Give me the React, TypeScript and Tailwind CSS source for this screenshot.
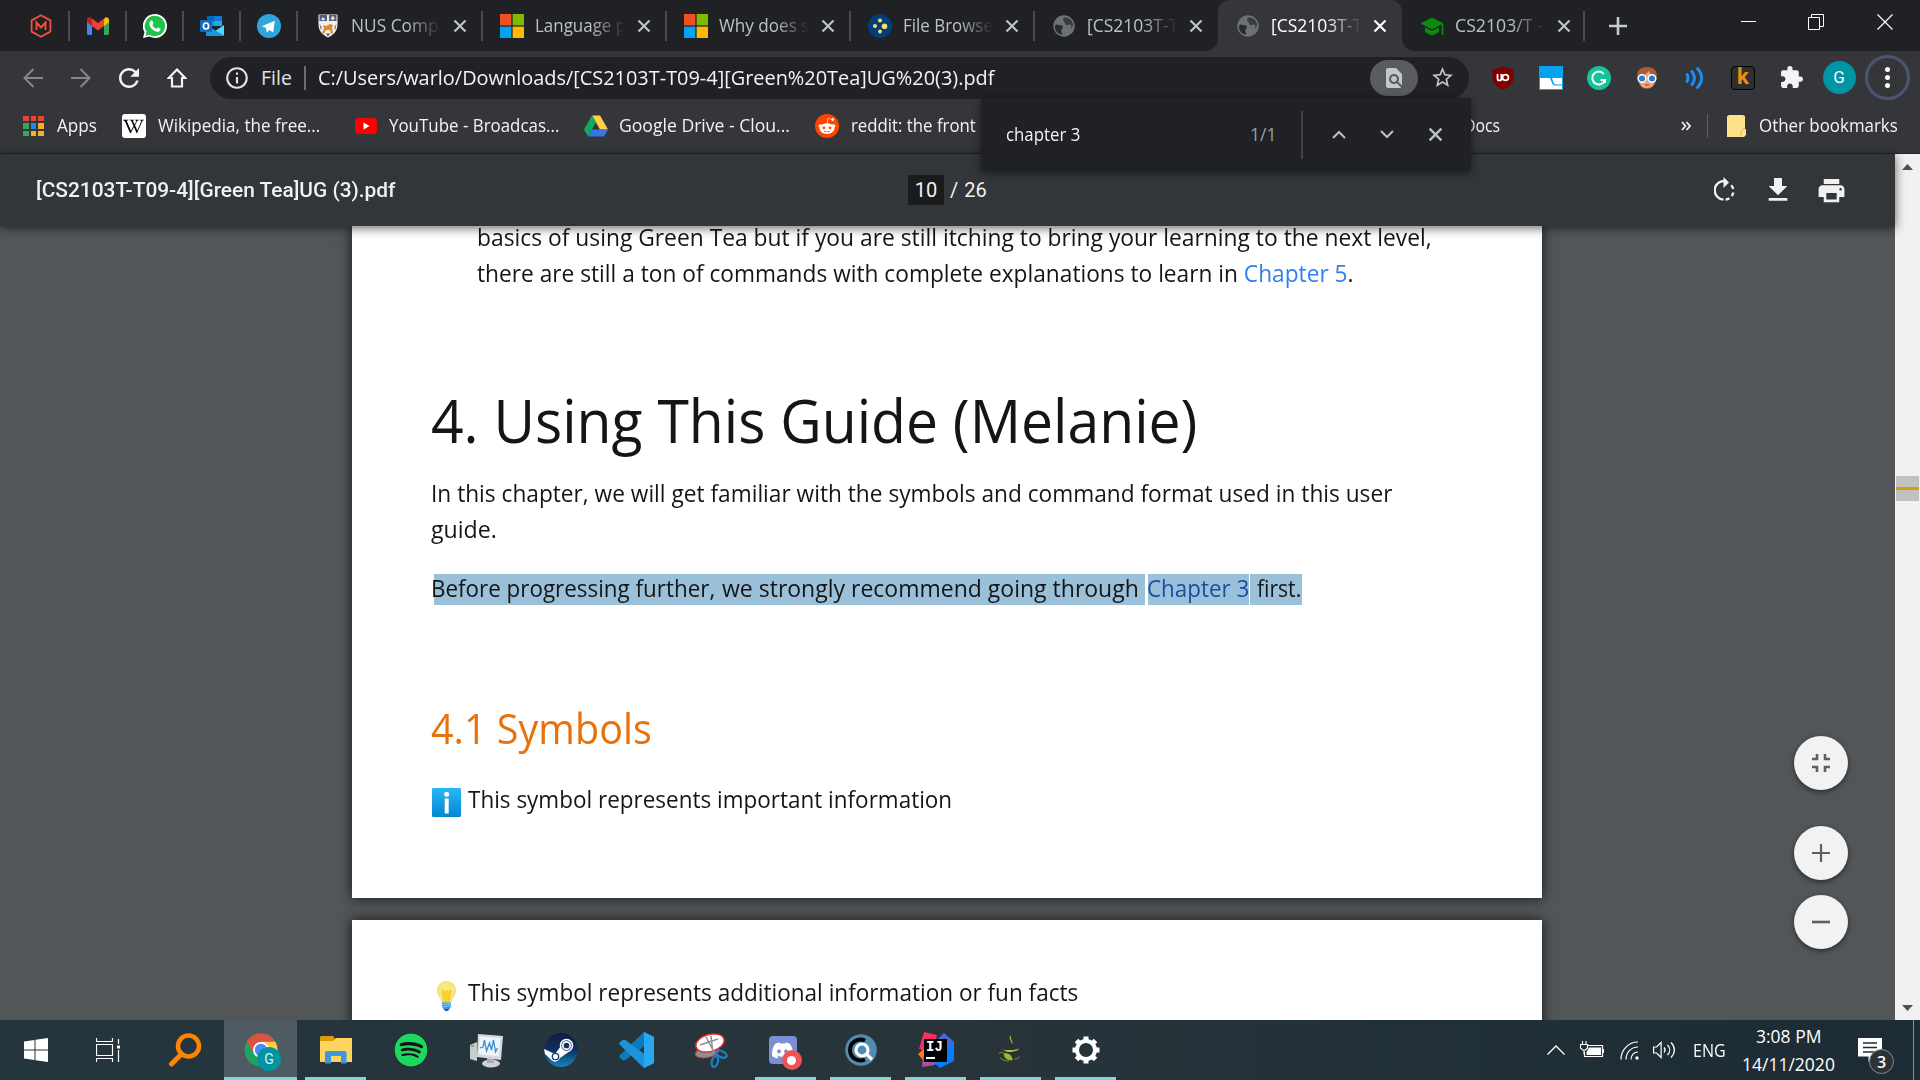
import { useLayoutEffect, useRef, useState, type ReactNode } from "react";
import { FaDiscord, FaRedditAlien, FaSpotify, FaWikipediaW } from "react-icons/fa";
import {
  MdExtension,
  MdFileDownload,
  MdFindInPage,
  MdInfoOutline,
  MdPrint,
  MdRefresh,
  MdStarBorder,
} from "react-icons/md";

/** One line of text, condensed or widened to fill the width its class gives. */
function Fit({ className, children }: { className: string; children: ReactNode }) {
  const outer = useRef<HTMLSpanElement>(null);
  const inner = useRef<HTMLSpanElement>(null);
  const [scale, setScale] = useState(1);
  useLayoutEffect(() => {
    if (outer.current && inner.current) {
      setScale(outer.current.offsetWidth / inner.current.offsetWidth);
    }
  }, []);
  return (
    <span ref={outer} className={`block shrink-0 whitespace-nowrap ${className}`}>
      <span ref={inner} className="inline-block origin-left align-top" style={{ transform: `scaleX(${scale})` }}>
        {children}
      </span>
    </span>
  );
}

function Svg({ vb = "0 0 24 24", className = "size-6", children }: { vb?: string; className?: string; children: ReactNode }) {
  return (
    <svg viewBox={vb} className={`shrink-0 ${className}`} fill="none">
      {children}
    </svg>
  );
}

function Cross({ className }: { className: string }) {
  return (
    <Svg vb="0 0 14 14" className={className}>
      <path d="M1.5 1.5l11 11M12.5 1.5l-11 11" stroke="currentColor" strokeWidth="2.2" />
    </Svg>
  );
}

/* ---------- tab icons ---------- */

const Module = () => (
  <Svg>
    <path d="M12 1.2l9.4 5.2v11.2L12 22.8l-9.4-5.2V6.4z" stroke="#f4503b" strokeWidth="1.8" strokeLinejoin="round" />
    <path d="M7.5 16V8.500l4.500 5 4.500-5V16" stroke="#f4503b" strokeWidth="1.9" />
  </Svg>
);
const Gmail = () => (
  <Svg>
    <path d="M1 6v13.500c0 .8.600 1.400 1.400 1.400H6V10z" fill="#4285f4" />
    <path d="M23 6v13.500c0 .8-.6 1.400-1.400 1.400H18V10z" fill="#34a853" />
    <path d="M18 5.500V12l5-3.800V6c0-2.400-2.600-3.400-4.200-2.200z" fill="#fbbc04" />
    <path d="M6 5.500V12L1 8.200V6c0-2.400 2.600-3.400 4.200-2.200z" fill="#c5221f" />
    <path d="M6 12V4.600l6 4.500 6-4.500V12l-6 4.500z" fill="#ea4335" />
  </Svg>
);
const Whatsapp = () => (
  <Svg>
    <path d="M12 0a12 12 0 0 1 0 24c-2 0-4-.5-5.600-1.400L0 24l1.500-6A12 12 0 0 1 12 0z" fill="#fff" />
    <path d="M12 1.800a10.200 10.200 0 0 1 0 20.400c-2 0-3.800-.5-5.300-1.500l-4.200 1.100 1.100-4A10.200 10.200 0 0 1 12 1.800z" fill="#1fc24d" />
    <path d="M8.400 6.500c.5 0 .9 0 1.200.8l.8 2c.1.400-.7 1.200-1 1.600.8 1.700 2.200 3 4 3.800.5-.4 1.200-1.500 1.700-1.300l2.100 1c.6.300.3 1.500-.1 2.100-.6.900-2 1.400-3 1.200-3.900-.8-7-3.800-7.700-7.200-.3-1.500.7-4 2-4z" fill="#fff" />
  </Svg>
);
const Outlook = () => (
  <Svg>
    <path d="M7 2h15v10H7z" fill="#1490df" />
    <path d="M7 2h7.500v5H7z" fill="#0364b8" />
    <path d="M14.500 7H22v5h-7.500z" fill="#28a8ea" />
    <path d="M14.500 2H22v5h-7.500z" fill="#0f78d4" />
    <path d="M6 11l9 6 9-6v9.500c0 .8-.7 1.500-1.500 1.500h-15c-.8 0-1.500-.7-1.500-1.500z" fill="#50d9ff" />
    <path d="M6 11l18 10.500c-.3.300-.9.500-1.500.5h-15c-.8 0-1.500-.7-1.500-1.500z" fill="#1a96e0" />
    <rect x="0" y="6" width="12" height="12" rx="1" fill="#0f6cbd" />
    <ellipse cx="6" cy="12" rx="2.600" ry="3" stroke="#fff" strokeWidth="1.7" />
  </Svg>
);
const Telegram = () => (
  <Svg>
    <circle cx="12" cy="12" r="12" fill="#2fa5dc" />
    <path d="M17.800 6.800L4.800 12.200l4 1.600 1 4.700 2.600-2.600 3.800 2.600z" fill="#fff" />
    <path d="M9.300 14.500l6-5.500-5 6.500" fill="#d3e9f6" />
  </Svg>
);
const Crest = () => (
  <Svg>
    <path d="M2.500 0.500h19V10c0 7-4 11-9.500 13.500C6.500 21 2.500 17 2.500 10z" fill="#f3f0ec" />
    <path d="M3.500 1h7.500v6H3.500zM13 1h7.500v6H13z" fill="#4a5f85" />
    <path d="M5 5.500l2-2.500 2.500 2.500L7 6.500zM14.500 4.500l2.300-3 2.300 3-2.300 2z" fill="#e7d9c0" />
    <path d="M7 11l3 1 4-2 3 1-1 3 1 5-2 1-1-4h-4l-2 4-2-1 2-4z" fill="#e58a2a" />
    <path d="M3.500 9.500l2 4-.5 3zM20.500 9.500l-2 4 .5 3zM10 19.500h4l-2 3z" fill="#3c527c" />
  </Svg>
);
const Microsoft = () => (
  <Svg>
    <path d="M0 0h11.400v11.400H0z" fill="#f25022" />
    <path d="M12.600 0H24v11.400H12.600z" fill="#7fba00" />
    <path d="M0 12.600h11.400V24H0z" fill="#00a4ef" />
    <path d="M12.600 12.600H24V24H12.600z" fill="#ffb900" />
  </Svg>
);
const Luminus = () => (
  <Svg>
    <circle cx="12" cy="12" r="12" fill="#043c7c" />
    <circle cx="12" cy="6.500" r="2.100" fill="#f5e05a" />
    <circle cx="7" cy="12" r="2.100" fill="#f5e05a" />
    <circle cx="16.500" cy="12.300" r="2.800" fill="#f5e05a" />
    <circle cx="12" cy="17.500" r="1.900" fill="#f5e05a" />
  </Svg>
);
const Globe = () => (
  <Svg>
    <circle cx="12" cy="12" r="10.700" fill="#6d7074" />
    <path d="M3 14c0-2 .5-3.500 1.500-3.500l5 1c2 .5 2 2.500.5 3.500s-.5 3 .5 5.500c-4-.2-7-3-7.500-6.500z" fill="#292a2d" />
    <path d="M12.500 3.500c-2 1-2 3-.5 4s.5 2.500 2 3.500 2-1 4-.5 1.500 3.500.5 5 1.500-1 2.300-3.500c.8-4-2.300-8.700-8.300-8.500z" fill="#3b3c40" />
  </Svg>
);
const Cap = () => (
  <Svg>
    <path d="M12 3.500l11.500 6L12 15.500.5 9.500z" fill="#0b8a0b" />
    <path d="M5 13.200l7 3.700 7-3.700v5L12 21.500 5 18.200z" fill="#0b8a0b" />
    <path d="M22.500 10v11" stroke="#0b8a0b" strokeWidth="1.800" />
  </Svg>
);

function Tab({ icon, active, last, children }: { icon: ReactNode; active?: boolean; last?: boolean; children: ReactNode }) {
  return (
    <div
      className={`relative flex h-full shrink-0 items-center pl-[18px] ${last ? "w-[182px]" : "w-[184px]"} ${
        active ? "rounded-t-xl bg-[#35363a] text-white" : "text-[#bdc1c6]"
      }`}
    >
      {active && (
        <>
          <span className="absolute bottom-0 -left-3 size-3 bg-[radial-gradient(circle_at_0_0,transparent_11.5px,#35363a_12px)]" />
          <span className="absolute -right-3 bottom-0 size-3 bg-[radial-gradient(circle_at_100%_0,transparent_11.5px,#35363a_12px)]" />
        </>
      )}
      {icon}
      <div className="ml-[11px] w-[92px] [mask-image:linear-gradient(to_right,black_60%,transparent_98%)] pb-px">{children}</div>
      <Cross className="ml-[10px] size-[14px]" />
    </div>
  );
}

const Divider = () => <span className="-mx-px h-[30px] w-0.5 shrink-0 bg-[#4b4c50]" />;

function TabStrip() {
  const pinned = [<Module />, <Gmail />, <Whatsapp />, <Outlook />, <Telegram />];
  return (
    <div className="flex h-[51px] items-center bg-[#202124] pl-[12px]">
      {pinned.map((p, i) => (
        <div key={i} className="flex items-center">
          <div className="flex w-[57px] justify-center">{p}</div>
          <Divider />
        </div>
      ))}
      <span className="w-px shrink-0" />
      <Tab icon={<Crest />}><Fit className="w-[88px]">NUS Comp</Fit></Tab>
      <Divider />
      <Tab icon={<Microsoft />}><Fit className="w-[91px]">Language p</Fit></Tab>
      <Divider />
      <Tab icon={<Microsoft />}><Fit className="w-[91px]">Why does s</Fit></Tab>
      <Divider />
      <Tab icon={<Luminus />}><Fit className="w-[90px]">File Browse</Fit></Tab>
      <Divider />
      <Tab icon={<Globe />}><Fit className="w-[91px]">[CS2103T-T</Fit></Tab>
      <Tab active icon={<Globe />}><Fit className="w-[91px]">[CS2103T-T</Fit></Tab>
      <Tab last icon={<Cap />}><Fit className="w-[88px]">CS2103/T -</Fit></Tab>
      <Divider />
      <Svg className="ml-[25px] size-[18px] text-[#c6c9cd]" vb="0 0 18 18">
        <path d="M9 0v18M0 9h18" stroke="currentColor" strokeWidth="2.600" />
      </Svg>
      <div className="mr-[27px] mb-[8px] ml-auto flex items-center text-white">
        <Svg vb="0 0 16 16" className="mr-[51px] size-4"><path d="M0 7.500h15" stroke="currentColor" /></Svg>
        <Svg vb="0 0 16 16" className="mr-[53px] size-4">
          <path d="M.5 3.500h11v12H.5zM3.500 3.500v-3h12v12h-4" stroke="currentColor" />
        </Svg>
        <Svg vb="0 0 16 16" className="size-4"><path d="M.5.5l15 15M15.500.5l-15 15" stroke="currentColor" strokeWidth="1.200" /></Svg>
      </div>
    </div>
  );
}

/* ---------- address row ---------- */

const Slot = ({ children }: { children: ReactNode }) => <div className="flex w-12 shrink-0 items-center justify-center">{children}</div>;

function AddressRow() {
  return (
    <div className="flex h-[53px] items-center pl-[9px] text-[#f1f3f4]">
      <Slot>
        <Svg className="size-5 text-[#85878a]" vb="0 0 20 20"><path d="M20 10H2M10.500 1L1.500 10l9 9" stroke="currentColor" strokeWidth="2" /></Svg>
      </Slot>
      <Slot>
        <Svg className="size-5 text-[#85878a]" vb="0 0 20 20"><path d="M0 10h18M9.500 1l9 9-9 9" stroke="currentColor" strokeWidth="2" /></Svg>
      </Slot>
      <Slot><MdRefresh className="size-[30px]" /></Slot>
      <Slot>
        <Svg className="size-5" vb="0 0 20 20"><path d="M10 1.500L1.800 10H5v8.500h10V10h3.200z" stroke="currentColor" strokeWidth="2.200" /></Svg>
      </Slot>
      <div className="ml-[9px] flex h-[42px] w-[1259px] shrink-0 items-center rounded-full bg-[#202124] pl-[14px]">
        <MdInfoOutline className="size-[26px] text-[#e0e2e4]" />
        <Fit className="ml-[11px] w-[31px] text-[19.500px] text-[#e0e2e4]">File</Fit>
        <span className="ml-3 h-6 w-0.5 bg-[#6b6d70]" />
        <Fit className="mr-px ml-[12px] w-[677px] text-[19.500px]">C:/Users/warlo/Downloads/[CS2103T-T09-4][Green%20Tea]UG%20(3).pdf</Fit>
        <span className="ml-auto flex h-9 w-12 items-center justify-center rounded-full bg-[#5a5b5e] text-[#c4c7ca]">
          <MdFindInPage className="size-6" />
        </span>
        <MdStarBorder className="mr-3.5 ml-3 size-[25px] text-[#c4c7ca]" />
      </div>
      <div className="ml-[10px] flex items-center">
        <Slot>
          <Svg>
            <path d="M12 0c3 2 6 3 10.500 3v9c0 5.500-4 9-10.500 12C5.500 21 1.500 17.500 1.500 12V3C6 3 9 2 12 0z" fill="#800000" />
            <path d="M6.500 8v4.500c0 1.300.7 2 2 2s2-.7 2-2V8" stroke="#fff" strokeWidth="1.700" />
            <path d="M10.500 8v4" stroke="#fff" strokeWidth="1.700" />
            <circle cx="14.500" cy="11.500" r="2.900" stroke="#fff" strokeWidth="1.700" />
          </Svg>
        </Slot>
        <Slot>
          <Svg>
            <path d="M0 0h24v24H0z" fill="#04a3ee" />
            <path d="M1 12h10l2 5c.5 1.500 1.500 2.500 3 2.500h7V23H1z" fill="#fff" />
            <path d="M13 12h10v6.500h-6c-1.500 0-2-.8-2.500-2z" fill="#fff" />
          </Svg>
        </Slot>
        <Slot>
          <Svg>
            <circle cx="12" cy="12" r="12" fill="#15c39a" />
            <path d="M16.800 7.800A6.500 6.500 0 1 0 18 14h-4.500M18 13v4" stroke="#fff" strokeWidth="2" />
          </Svg>
        </Slot>
        <Slot>
          <Svg>
            <path d="M3 15C0 5 5 1 12 1s12 4 9 14c-1 5-5 8-9 8s-8-3-9-8z" fill="#a5603a" />
            <path d="M5 11c4-1 7-4 9-6 1 3 3 5 5 6v5c0 4-3 6-7 6s-7-2-7-6z" fill="#eaa57c" />
            <circle cx="7" cy="12.500" r="3.800" fill="#2b7bd0" stroke="#fff" strokeWidth="1.500" />
            <circle cx="17" cy="12.500" r="3.800" fill="#2b7bd0" stroke="#fff" strokeWidth="1.500" />
            <path d="M10 19h4" stroke="#b5533f" strokeWidth="1.400" />
          </Svg>
        </Slot>
        <Slot>
          <Svg>
            <path d="M4 8.500c1.500 2.500 1.500 4.500 0 7M9 5.500c3 4 3 9 0 13M14.500 2.500c5.500 6 5.500 13 0 19" stroke="#1a8cf5" strokeWidth="3" strokeLinecap="round" />
          </Svg>
        </Slot>
        <Slot>
          <span className="flex size-6 items-center justify-center rounded-[4px] border border-black bg-[#2f2f2f] pb-0.5 font-['Roboto'] text-[22px] leading-none font-bold text-[#f28a11]">k</span>
        </Slot>
        <Slot><MdExtension className="size-[25px]" /></Slot>
        <Slot>
          <span className="flex size-[33px] items-center justify-center rounded-full bg-[#0095a5] font-['Roboto'] text-[17px] text-white">G</span>
        </Slot>
        <Slot>
          <span className="flex size-[45px] shrink-0 flex-col items-center justify-center gap-[3px] rounded-full border-[3px] border-[#4a5670]">
            <i className="size-[5px] rounded-full bg-white" />
            <i className="size-[5px] rounded-full bg-white" />
            <i className="size-[5px] rounded-full bg-white" />
          </span>
        </Slot>
      </div>
    </div>
  );
}

/* ---------- bookmarks ---------- */

const appColors = [
  "bg-[#ea4335]", "bg-[#ea4335]", "bg-[#ea4335]",
  "bg-[#34a853]", "bg-[#1a8cf0]", "bg-[#fbae17]",
  "bg-[#34a853]", "bg-[#fbae17]", "bg-[#fbae17]",
];

function Bookmarks() {
  return (
    <div className="flex h-[44px] items-center pl-[23px] text-[18px] text-[#f1f3f4]">
      <div className="grid grid-cols-3 gap-[2px]">
        {appColors.map((c, i) => <i key={i} className={`size-[5.5px] ${c}`} />)}
      </div>
      <Fit className="ml-[13px] w-10 pb-0.5">Apps</Fit>
      <span className="ml-[25px] flex size-6 items-center justify-center rounded-[3px] bg-white text-black"><FaWikipediaW className="size-[21px]" /></span>
      <Fit className="ml-[12px] w-[162px] pb-0.5">Wikipedia, the free...</Fit>
      <Svg className="ml-[35px] h-5 w-[22px]" vb="0 0 22 20">
        <rect y="2" width="22" height="16" rx="3.500" fill="#f00" />
        <path d="M8.500 6.500v7l6-3.500z" fill="#fff" />
      </Svg>
      <Fit className="ml-[12px] w-[170px] pb-0.5">YouTube - Broadcas...</Fit>
      <Svg className="ml-[25px] size-6">
        <path d="M8 1.500h8l8 14h-8z" fill="#ffcf48" />
        <path d="M8 1.500l4 7L4 22.500l-4-7z" fill="#11a861" />
        <path d="M8 15.500h16l-4 7H4z" fill="#3777e3" />
      </Svg>
      <Fit className="ml-[11px] w-[171px] pb-0.5">Google Drive - Clou...</Fit>
      <span className="ml-[25px] flex size-6 items-center justify-center rounded-full bg-[#ff4500] text-white"><FaRedditAlien className="size-[18px]" /></span>
      <Fit className="ml-[12px] w-[125px] pb-0.5">reddit: the front</Fit>
      <Fit className="ml-[488px] w-[36px] pb-0.5">Docs</Fit>
      <Svg className="ml-[181px] size-[10px]" vb="0 0 10 10">
        <path d="M1 1l3.500 4L1 9M5.500 1L9 5 5.500 9" stroke="currentColor" strokeWidth="1.700" />
      </Svg>
      <span className="ml-[16px] h-6 w-px bg-[#5f6165]" />
      <Svg className="ml-[19px] h-[22px] w-[19px]" vb="0 0 19 22">
        <path d="M0 1.500L2 0h14l2 1v13h1v6l-2 2H0z" fill="#ffe18b" />
        <path d="M14 21v-4.500l2-2.500h2" stroke="#e3b84d" />
      </Svg>
      <Fit className="ml-[13px] w-[139px] pb-0.5">Other bookmarks</Fit>
    </div>
  );
}

function FindBar() {
  return (
    <div className="absolute top-[98px] left-[981px] z-30 flex h-[73px] w-[490px] items-center rounded-b-[4px] bg-[#202124] pl-[25px] text-[17.500px] text-[#f1f3f4] shadow-[0_2px_8px_rgba(0,0,0,0.5)]">
      <Fit className="w-[74px]">chapter 3</Fit>
      <Fit className="ml-[170px] w-[26px] text-[#9aa0a6]">1/1</Fit>
      <span className="ml-[25px] h-12 w-0.5 bg-[#414246]" />
      <Svg vb="0 0 14 9" className="ml-[29px] h-[9px] w-[14px] text-[#bdc1c6]"><path d="M1 8l6-6 6 6" stroke="currentColor" strokeWidth="2" /></Svg>
      <Svg vb="0 0 14 9" className="ml-[34px] h-[9px] w-[14px] text-[#bdc1c6]"><path d="M1 1l6 6 6-6" stroke="currentColor" strokeWidth="2" /></Svg>
      <Cross className="ml-[34px] size-[15px] text-[#bdc1c6]" />
    </div>
  );
}

/* ---------- document ---------- */

function PdfBar() {
  return (
    <div className="relative z-10 flex h-[72px] items-center bg-[#323639] pl-9 font-['Roboto'] text-[20px] text-[#f1f1f1] shadow-[0_2px_10px_rgba(0,0,0,0.6)]">
      <Fit className="w-[359px] font-medium">[CS2103T-T09-4][Green Tea]UG (3).pdf</Fit>
      <span className="ml-[513px] flex h-[30px] w-9 items-center justify-center bg-[#191b1c]">10</span>
      <span className="ml-[6px]">/</span>
      <Fit className="ml-[6px] w-[22px]">26</Fit>
      <Svg vb="0 0 22 25" className="ml-[728px] h-[25px] w-[22px] -translate-y-px">
        <path d="M10.500 4A9 9 0 0 0 9.500 22.600" stroke="currentColor" strokeWidth="2.300" />
        <path d="M9.500 0L15 5.500 9.500 11z" fill="currentColor" />
        <path d="M17.200 8.200a9 9 0 0 1 2 3.800M19.300 15.500a9 9 0 0 1-1.600 3.600M15.400 21.200a9 9 0 0 1-3.800 1.500" stroke="currentColor" strokeWidth="2.300" />
      </Svg>
      <MdFileDownload className="ml-[26px] size-[32px]" />
      <MdPrint className="ml-[22px] size-[31px]" />
    </div>
  );
}

const Info = () => (
  <Svg vb="0 0 29 29" className="mt-[7px] size-[29px]">
    <defs>
      <linearGradient id="info" x1="0" y1="0" x2="0" y2="1">
        <stop offset="0" stopColor="#29b6f6" />
        <stop offset="1" stopColor="#0288d1" />
      </linearGradient>
    </defs>
    <rect width="29" height="29" rx="1.200" fill="url(#info)" />
    <circle cx="14.700" cy="6.200" r="2.500" fill="#fff" />
    <rect x="12.700" y="10.500" width="4" height="15" fill="#fff" />
  </Svg>
);

const Bulb = () => (
  <Svg vb="0 0 19 30" className="mt-[7px] ml-[5px] h-[30px] w-[19px]">
    <path d="M9.500 0.500c5 0 9 3.900 9 9 0 5-4 7-4.500 12H5C4.500 16.500.5 14.500.5 9.500c0-5.100 4-9 9-9z" fill="#fbe878" stroke="#dcc766" strokeWidth=".6" />
    <path d="M5 9l2.500 2 2-1.500 2 1.500L14 9l-2 12H7z" fill="#f7d52c" stroke="#eab92b" strokeWidth=".7" />
    <path d="M5 21.500h9v4l-2 3.500H7l-2-3.500z" fill="#3d97e3" />
    <path d="M5 23.500l9-1M5 26l9-1.500" stroke="#a7d5f7" strokeWidth=".8" />
    <path d="M7 28h5l-1 2H8z" fill="#1c62a8" />
  </Svg>
);

function Document() {
  return (
    <div className="h-[794px] overflow-hidden bg-[#525659] pl-[352px] text-[23.500px] leading-9 text-[#151515]">
      <article className="flex h-[672px] w-[1190px] flex-col bg-white pl-[79px] shadow-[0_0_12px_rgba(0,0,0,0.75)]">
        <div className="-mt-[7px] pl-[46px]">
          <Fit className="w-[955px]">basics of using Green Tea but if you are still itching to bring your learning to the next level,</Fit>
          <Fit className="w-[877px]">
            there are still a ton of commands with complete explanations to learn in <span className="text-[#2f80ed]">Chapter 5</span>.
          </Fit>
        </div>
        <h1 className="mt-[89px] text-[61px] leading-[80px]"><Fit className="w-[766px]">4. Using This Guide (Melanie)</Fit></h1>
        <p className="mt-[15px]">
          <Fit className="w-[961px]">In this chapter, we will get familiar with the symbols and command format used in this user</Fit>
          <Fit className="w-[66px]">guide.</Fit>
        </p>
        <div className="relative mt-[23px] flex">
          <span className="absolute top-[4px] left-[3px] h-[31px] w-[711px] bg-[#9bc1da]" />
          <span className="absolute top-[4px] left-[717px] h-[31px] w-[101px] bg-[#9bc1da]" />
          <span className="absolute top-[4px] left-[819px] h-[31px] w-[52px] bg-[#9bc1da]" />
          <Fit className="relative w-[284px]">Before progressing further,</Fit>
          <Fit className="relative ml-[7px] w-[417px]">we strongly recommend going through</Fit>
          <Fit className="relative ml-[8px] w-[102px] text-[#1d4d9f]">Chapter 3</Fit>
          <Fit className="relative ml-[8px] w-[44px]">first.</Fit>
        </div>
        <h2 className="mt-[94px] text-[41.500px] leading-[56px] text-[#e8710a]"><Fit className="w-[221px]">4.1 Symbols</Fit></h2>
        <div className="mt-[25px] flex pl-px">
          <Info />
          <Fit className="ml-[7px] w-[484px]">This symbol represents important information</Fit>
        </div>
      </article>
      <article className="mt-[22px] h-[300px] w-[1190px] bg-white pt-[54px] pl-[79px] shadow-[0_0_12px_rgba(0,0,0,0.75)]">
        <div className="flex pl-px">
          <Bulb />
          <Fit className="ml-[12px] w-[610px]">This symbol represents additional information or fun facts</Fit>
        </div>
      </article>
    </div>
  );
}

function ZoomButtons() {
  const round = "flex size-[54px] items-center justify-center rounded-full bg-[#f2f2f2] text-[#606060] shadow-[0_2px_5px_rgba(0,0,0,0.5)]";
  return (
    <div className="absolute top-[736px] left-[1794px] z-20 flex flex-col">
      <span className={round}>
        <Svg vb="0 0 18 18" className="size-[18px]"><path d="M0 5h5V0M13 0v5h5M0 13h5v5M18 13h-5v5" stroke="currentColor" strokeWidth="2.600" /></Svg>
      </span>
      <span className={`mt-9 ${round}`}>
        <Svg vb="0 0 18 18" className="size-[18px]"><path d="M9 0v18M0 9h18" stroke="currentColor" strokeWidth="2.200" /></Svg>
      </span>
      <span className={`mt-[15px] ${round}`}>
        <Svg vb="0 0 18 18" className="size-[18px]"><path d="M0 9h18" stroke="currentColor" strokeWidth="2.600" /></Svg>
      </span>
    </div>
  );
}

function ScrollBar() {
  return (
    <div className="flex w-[25px] flex-col items-center bg-[#f1f1f1] text-[#505050]">
      <Svg vb="0 0 11 6" className="mt-[10px] h-[6px] w-[11px]"><path d="M0 6l5.500-6L11 6z" fill="currentColor" /></Svg>
      <span className="mt-[306px] flex h-[25px] w-[23px] items-center bg-[#c1c1c1]">
        <i className="h-[3px] w-full bg-[#d5a100]" />
      </span>
      <Svg vb="0 0 11 6" className="mt-auto mb-[9px] h-[6px] w-[11px]"><path d="M0 0l5.500 6L11 0z" fill="currentColor" /></Svg>
    </div>
  );
}

/* ---------- taskbar ---------- */

function Task({ children, open, wide }: { children: ReactNode; open?: boolean; wide?: boolean }) {
  return (
    <div className={`relative flex h-full shrink-0 items-center justify-center ${wide ? "w-[74px]" : "w-[75px]"}`}>
      {wide && <span className="absolute inset-y-0 left-0 w-[73px] bg-[#4f5b62]" />}
      <span className="relative flex">{children}</span>
      {open && <span className={`absolute bottom-0 h-[3px] bg-[#82d6da] ${wide ? "left-0 w-[73px]" : "left-[7px] w-[61px]"}`} />}
    </div>
  );
}

function Taskbar() {
  return (
    <div className="flex h-[60px] items-center bg-linear-to-r from-[#24353e] via-[#28343a] to-[#1c2b34] text-white">
      <div className="flex w-[72px] justify-center">
        <Svg><path d="M0 3.400l10.500-1.500v9.500H0zM11.500 1.700L24 0v11.400H11.500zM0 12.500h10.500V22L0 20.600zM11.500 12.500H24V24l-12.500-1.700z" fill="#fff" /></Svg>
      </div>
      <div className="flex w-[71px] justify-center">
        <Svg>
          <path d="M.5 0v3.500h16V0M.5 6.500h16v11H.5zM.5 24v-3.500h16V24M22.500 1v5M22.500 12v12" stroke="#fff" strokeWidth="1.200" />
          <path d="M21 7.500h3v3h-3z" fill="#fff" />
        </Svg>
      </div>
      <div className="ml-0.5 flex w-[79px] justify-center">
        <Svg vb="0 0 34 34" className="size-[34px]">
          <circle cx="20.500" cy="13" r="10.500" stroke="#ff8200" strokeWidth="4.500" />
          <path d="M13.500 21L3.500 31" stroke="#ff8200" strokeWidth="5" strokeLinecap="round" />
        </Svg>
      </div>
      <Task open wide>
        <span className="relative flex">
          <Svg vb="0 0 34 34" className="size-[34px]">
            <circle cx="17" cy="17" r="16.500" fill="#1da462" />
            <path d="M2.700 8.800A16.500 16.500 0 0 1 31.300 8.800H17l-7 12.300z" fill="#dd5144" />
            <path d="M17 8.800h14.300A16.500 16.500 0 0 1 17 33.500l7-12.300z" fill="#ffcd46" />
            <circle cx="17" cy="17" r="8" fill="#fff" />
            <circle cx="17" cy="17" r="6.200" fill="#4c8bf5" />
          </Svg>
          <span className="absolute top-[14px] left-[13px] flex size-6 items-center justify-center rounded-full bg-[#0095a5] font-['Roboto'] text-[14px] text-[#d9f1f3]">G</span>
        </span>
      </Task>
      <Task open>
        <Svg vb="0 0 32 28" className="h-7 w-8">
          <path d="M0 1.500C0 .7.700 0 1.500 0H13l2 3-2 3H0z" fill="#dd9c07" />
          <path d="M0 5h13l3-3h16v24H0z" fill="#fdd45d" />
          <path d="M5 27.500V17c0-1 .6-2 2-2h17.500c1.400 0 2 1 2 2v10.500H21V20H11v7.500z" fill="#3b97df" />
        </Svg>
      </Task>
      <Task>
        <span className="flex rounded-full bg-[#111]"><FaSpotify className="size-[34px] text-[#1ed760]" /></span>
      </Task>
      <Task>
        <Svg vb="0 0 34 36" className="h-9 w-[34px]">
          <path d="M1 13l7-3v19l-7-2z" fill="#c9cdcf" />
          <path d="M2 14h3" stroke="#3ddc3d" strokeWidth="2" />
          <ellipse cx="22" cy="31.500" rx="9" ry="4" fill="#cfd2d4" />
          <path d="M18 24h7v7h-7z" fill="#a9adb0" />
          <path d="M9 2l25 2-2 24-24-3z" fill="#d7dadc" />
          <path d="M11 4.500l20.500 1.500-1.700 18.500L9.500 22z" fill="#eef5fa" />
          <path d="M11 16l3-1 1.500-7 2 11 3-8 2 7 2-10 2 12 2-4" stroke="#3c8fcb" strokeWidth="1.300" />
        </Svg>
      </Task>
      <Task>
        <Svg vb="0 0 34 34" className="size-[34px]">
          <defs>
            <linearGradient id="steam" x1="0" y1="0" x2="0" y2="1">
              <stop offset="0" stopColor="#16193d" />
              <stop offset=".5" stopColor="#0c3263" />
              <stop offset="1" stopColor="#1387b8" />
            </linearGradient>
          </defs>
          <circle cx="17" cy="17" r="17" fill="url(#steam)" />
          <path d="M0 16l11 5 6-8 9 5-10 7c-1 3-5 5-8 2.500L1 21z" fill="#fff" />
          <circle cx="22.500" cy="12.500" r="6" fill="#13325f" stroke="#fff" strokeWidth="1.600" />
          <circle cx="22.500" cy="12.500" r="3.700" stroke="#fff" strokeWidth="1.700" />
          <circle cx="11.500" cy="23.500" r="3.200" stroke="#16407a" strokeWidth="1.300" />
        </Svg>
      </Task>
      <Task>
        <Svg vb="0 0 36 36" className="size-9">
          <path d="M26 0L2 23c-1 1-1 2 0 3l2.500 2c1 .8 2 .6 2.800 0L36 7V5z" fill="#0e79bd" />
          <path d="M26 36L2 13c-1-1-1-2 0-3l2.500-2c1-.8 2-.6 2.800 0L36 29v2z" fill="#1c93d9" />
          <path d="M26 0l10 5v26l-10 5z" fill="#2aa7f2" />
        </Svg>
      </Task>
      <Task>
        <Svg vb="0 0 34 36" className="h-9 w-[34px]">
          <ellipse cx="13" cy="20" rx="12" ry="5.500" fill="#8d9093" stroke="#c23a3a" transform="rotate(-12 13 20)" />
          <ellipse cx="16" cy="11" rx="14.500" ry="8.500" fill="#fff" stroke="#e03131" strokeWidth="1.500" transform="rotate(-16 16 11)" />
          <path d="M12 5l9 17M17 4l2 18M6 13l18-6" stroke="#8d9093" strokeWidth="1.500" />
          <ellipse cx="27.500" cy="22" rx="5.500" ry="3" stroke="#1b7fc4" strokeWidth="2.400" transform="rotate(25 27 22)" />
          <ellipse cx="21" cy="29.500" rx="3" ry="5.500" stroke="#1b7fc4" strokeWidth="2.400" transform="rotate(14 21 29)" />
        </Svg>
      </Task>
      <Task open>
        <span className="relative flex size-[34px] items-center">
          <span className="flex size-7 items-center justify-center rounded-[4px] bg-[#7b8fd4] text-white"><FaDiscord className="size-[23px]" /></span>
          <span className="absolute top-[17px] left-[13px] flex size-5 items-center justify-center rounded-full bg-[#ed5555]"><i className="size-[9px] rounded-full bg-white" /></span>
        </span>
      </Task>
      <Task open>
        <Svg vb="0 0 32 32" className="size-8">
          <circle cx="16" cy="16" r="15.800" fill="#508bb0" />
          <path d="M20 6.500A10.500 10.500 0 1 0 20 25.500" stroke="#000" strokeWidth="4" />
          <circle cx="17" cy="16" r="6" stroke="#fff" strokeWidth="3.200" />
          <path d="M21 19.500L27 25.500" stroke="#fff" strokeWidth="3.200" />
        </Svg>
      </Task>
      <Task open>
        <span className="relative flex size-9 items-center justify-center">
          <Svg vb="0 0 36 36" className="absolute inset-0 size-9">
            <path d="M6 0l13 3-4 18L1 17z" fill="#fe2c63" />
            <path d="M0 22l8-7 4 14-7-1z" fill="#fc801d" />
            <path d="M5 24l15 2-3 7-13 2z" fill="#a6529c" />
            <path d="M19 8l7-7 10 9v19l-14 7-7-6z" fill="#087cfa" />
            <path d="M19 8l7-7 10 9-9 8z" fill="#4668d0" />
          </Svg>
          <span className="relative flex size-[23px] flex-col bg-black pl-[2px]">
            <b className="font-['Liberation_Mono'] text-[14px] leading-[16px]">IJ</b>
            <i className="mt-[2px] h-[2px] w-[9px] bg-white" />
          </span>
        </span>
      </Task>
      <Task open>
        <Svg vb="0 0 24 30" className="-mt-0.5 -ml-1 h-[28px] w-[22px]">
          <path d="M14 1c-3 3 3 5 1 8" stroke="#9aad2a" strokeWidth="1.400" />
          <path d="M5 15.500c5 1 12 1 18-1-2 4-12 5-16 2z" fill="#b0c23a" />
          <path d="M6 20c5-1 9 1 10 7-5 1-9-1-10-7z" fill="#a5b62f" />
          <path d="M1 20c3-2 4-2 5 0M2 24c2 3 6 4 10 4M18 26c3 0 5-1 5-3" stroke="#8a9b26" strokeWidth="1" />
        </Svg>
      </Task>
      <Task open>
        <Svg vb="0 0 28 28" className="size-7">
          <circle cx="14" cy="14" r="9" stroke="#fff" strokeWidth="4" />
          <path d="M14 0.500v5M14 22.500v5M.5 14h5M22.500 14h5M4.500 4.500L8 8M20 20l3.500 3.500M23.500 4.500L20 8M8 20l-3.500 3.500" stroke="#fff" strokeWidth="5" />
        </Svg>
      </Task>
      <div className="ml-auto flex items-center">
        <Svg vb="0 0 18 10" className="h-[10px] w-[18px]"><path d="M.5 9.500L9 1l8.500 8.500" stroke="#fff" strokeWidth="1.300" /></Svg>
        <Svg vb="0 0 24 18" className="ml-[15px] h-[18px] w-6">
          <path d="M7 4.500h15.500v11H4.500V11M23.500 8v4" stroke="#fff" strokeWidth="1.200" />
          <path d="M9 6.500h12v7.500H6.500V11z" fill="#fff" />
          <path d="M2.500 0v3M6 0v3M.5 3.500h7V7L5.500 9h-3l-2-2zM4 9v4" stroke="#fff" strokeWidth="1.100" />
        </Svg>
        <Svg vb="0 0 19 19" className="ml-[16px] size-[19px]">
          <circle cx="17" cy="17" r="1.700" fill="#fff" />
          <path d="M1 18.500C1 9 8.500 1 18 1M6 18.500C6 11.500 11 6 18 6M11 18.500c0-4.500 3-7.500 7-7.500" stroke="#fff" strokeWidth="1.200" />
        </Svg>
        <Svg vb="0 0 23 18" className="ml-[14px] h-[18px] w-[23px]">
          <path d="M.6 6h3l4.500-4.500v15L3.600 12h-3z" stroke="#fff" strokeWidth="1.200" />
          <path d="M11 6.500c1.300 1.500 1.300 3.500 0 5M14.500 4c3 3 3 7 0 10M18 1.500c4.500 4.500 4.500 10.500 0 15" stroke="#fff" strokeWidth="1.200" />
        </Svg>
        <Fit className="ml-[17px] w-[33px] text-[17.500px]">ENG</Fit>
        <div className="ml-[16px] flex w-[93px] flex-col items-center text-[17.500px] leading-7">
          <Fit className="w-[65px]">3:08 PM</Fit>
          <Fit className="w-[93px]">14/11/2020</Fit>
        </div>
        <span className="relative ml-[23px] flex">
          <Svg>
            <path d="M0 0h24v18.500h-8.500L10.500 24v-5.500H0z" fill="#fff" />
            <path d="M5 5h14M5 9.500h14M5 14h14" stroke="#1c2b34" strokeWidth="1.300" />
          </Svg>
          <span className="absolute top-[11px] left-[11px] flex size-[25px] items-center justify-center rounded-full border border-[#85898c] bg-[#2c3236] text-[16px] font-semibold">3</span>
        </span>
        <span className="mr-[6px] ml-[31px] h-[60px] w-px bg-[#88939a]" />
      </div>
    </div>
  );
}

export default function App() {
  return (
    <div className="relative flex h-[1080px] w-[1920px] flex-col overflow-hidden bg-[#35363a] font-['Open_Sans','Noto_Sans',sans-serif] text-[17.500px]">
      <TabStrip />
      <AddressRow />
      <Bookmarks />
      <div className="mt-[5px] h-px bg-[#252629]" />
      <div className="flex h-[866px]">
        <main className="w-[1895px]">
          <PdfBar />
          <Document />
        </main>
        <ScrollBar />
      </div>
      <Taskbar />
      <FindBar />
      <ZoomButtons />
    </div>
  );
}
